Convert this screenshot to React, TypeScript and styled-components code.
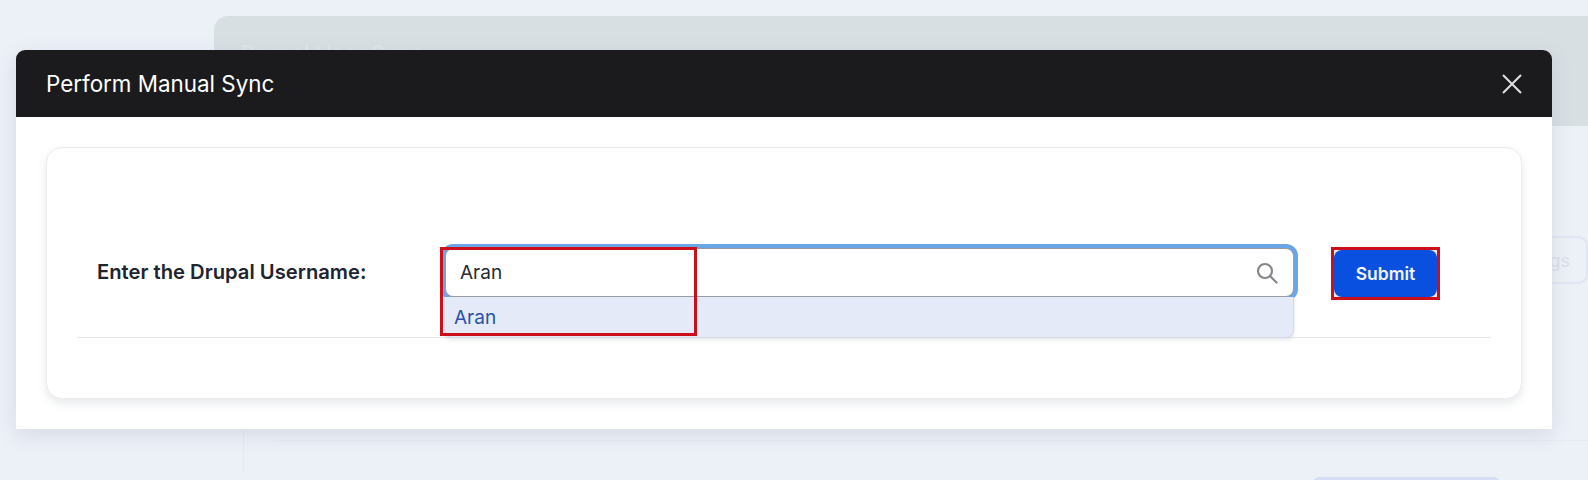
import React from "react";
import styled, { createGlobalStyle } from "styled-components";

const Global = createGlobalStyle`
  html, body { margin: 0; padding: 0; background: #ecf0f7; }
  * { box-sizing: border-box; }
  body { font-family: Inter, "Noto Sans", sans-serif; }
`;

const Page = styled.div`
  position: relative;
  height: 480px;
  overflow: hidden;
  background: #ecf0f7;
  padding: 16px 0 0 214px;
`;

const PanelHeader = styled.div`
  height: 110px;
  background: #d8dfe3;
  border-radius: 14px 0 0 0;
  padding: 23px 0 0 26px;
`;

const PanelTitle = styled.h1`
  margin: 0;
  font-size: 22px;
  line-height: 28px;
  font-weight: 500;
  color: #e0e5e8;
`;

const PanelToolbar = styled.div`
  display: flex;
  justify-content: flex-end;
  padding: 110px 0 0 0;
  height: 304px;
`;

const GhostButton = styled.div`
  height: 48px;
  padding: 0 16px;
  display: flex;
  align-items: center;
  border: 2px solid #e0e5f3;
  border-radius: 10px;
  font-size: 18px;
  color: #dbe0ea;
`;

const PanelContent = styled.div`
  margin-left: 29px;
  display: flex;
  flex-direction: column;
`;

const ContentFrame = styled.div`
  flex: none;
  height: 42px;
  padding-top: 10px;
  border-left: 1px solid #e6e9f0;
`;

const ContentRule = styled.div`
  margin-left: 29px;
  border-top: 1px solid #e6e9f0;
`;

const GhostAction = styled.div`
  flex: none;
  align-self: flex-end;
  margin: 5px 88px 0 0;
  width: 187px;
  height: 20px;
  border-radius: 6px;
  background: #d5def5;
`;

const Modal = styled.section`
  position: absolute;
  left: 16px;
  top: 50px;
  width: 1536px;
  height: 379px;
  background: #fff;
  border-radius: 9px 9px 0 0;
  box-shadow: 0 6px 20px rgba(120, 130, 150, 0.18);
`;

const ModalHeader = styled.header`
  height: 67px;
  padding: 0 30px;
  display: flex;
  align-items: center;
  justify-content: space-between;
  background: #1b1b1d;
  border-radius: 9px 9px 0 0;
`;

const ModalTitle = styled.h2`
  margin: 0;
  font-size: 22.4px;
  font-weight: 400;
  color: #fff;
`;

const CloseButton = styled.button`
  padding: 0;
  width: 20px;
  height: 20px;
  display: flex;
  border: 0;
  background: none;
  color: #e2e2e2;
`;

const ModalBody = styled.div`
  padding: 30px;
`;

const Card = styled.div`
  height: 252px;
  padding: 0 30px;
  background: #fff;
  border: 1px solid #ececee;
  border-radius: 16px;
  box-shadow: 0 4px 10px rgba(130, 140, 155, 0.2);
`;

const FormRow = styled.div`
  display: grid;
  grid-template-columns: 312px 849px 110px;
  column-gap: 36px;
  align-items: start;
  margin-top: 100px;
  padding: 0 0 41px 20px;
  height: 90px;
  border-bottom: 1px solid #e6e8ec;
`;

const Label = styled.label`
  font-size: 20.2px;
  font-weight: 600;
  line-height: 48px;
  white-space: nowrap;
  color: #20242f;
`;

const SearchField = styled.div`
  position: relative;
  height: 49px;
  display: flex;
  align-items: center;
  padding: 0 15px 0 14px;
  background: #fff;
  border: 1px solid #9a9ca3;
  border-radius: 8px;
  box-shadow: 0 0 0 4px #6aa5e6;
`;

const SearchInput = styled.input`
  flex: 1;
  min-width: 0;
  padding: 0;
  border: 0;
  outline: 0;
  background: none;
  font: 400 19px Inter, sans-serif;
  color: #262a33;
`;

const SearchIcon = styled.svg`
  width: 22px;
  height: 22px;
  color: #85878b;
`;

const Dropdown = styled.div`
  position: absolute;
  left: -2px;
  right: -1px;
  top: 48px;
  height: 41px;
  padding: 0 9px;
  display: flex;
  align-items: center;
  background: #e4eaf8;
  border: 1px solid #d3d8e4;
  border-top: 0;
  border-radius: 0 0 8px 8px;
  box-shadow: 0 2px 4px rgba(120, 130, 150, 0.2);
  font-size: 19px;
  color: #2a52a8;
`;

const Highlight = styled.div`
  position: absolute;
  left: -6px;
  top: -2px;
  width: 257px;
  height: 89px;
  border: 3px solid #cc0f1a;
  pointer-events: none;
`;

const SubmitFrame = styled.div`
  margin: -1px 0 0 1px;
  height: 53px;
  border: 3px solid #cc0f1a;
  background: #f0e6e8;
`;

const SubmitButton = styled.button`
  display: block;
  width: 100%;
  height: 100%;
  border: 0;
  border-radius: 8px;
  background: #0a50e0;
  color: #f2f6ff;
  font: 600 17.5px Inter, sans-serif;
`;

export default function App() {
  return (
    <>
      <Global />
      <Page>
        <PanelHeader>
          <PanelTitle>Drupal User Sync</PanelTitle>
        </PanelHeader>
        <PanelToolbar>
          <GhostButton>Settings</GhostButton>
        </PanelToolbar>
        <PanelContent>
          <ContentFrame>
            <ContentRule />
          </ContentFrame>
          <GhostAction />
        </PanelContent>
        <Modal>
          <ModalHeader>
            <ModalTitle>Perform Manual Sync</ModalTitle>
            <CloseButton aria-label="Close">
              <svg width="20" height="20" viewBox="0 0 20 20" fill="none" stroke="currentColor" strokeWidth="2">
                <path d="M1 1 19 19M19 1 1 19" />
              </svg>
            </CloseButton>
          </ModalHeader>
          <ModalBody>
            <Card>
              <FormRow>
                <Label>Enter the Drupal Username:</Label>
                <SearchField>
                  <SearchInput defaultValue="Aran" />
                  <SearchIcon viewBox="0 0 22 22" fill="none" stroke="currentColor" strokeWidth="2.2">
                    <circle cx="9" cy="9" r="7" />
                    <path d="M14 14 20.5 20.5" strokeLinecap="round" />
                  </SearchIcon>
                  <Dropdown>Aran</Dropdown>
                  <Highlight />
                </SearchField>
                <SubmitFrame>
                  <SubmitButton>Submit</SubmitButton>
                </SubmitFrame>
              </FormRow>
            </Card>
          </ModalBody>
        </Modal>
      </Page>
    </>
  );
}
